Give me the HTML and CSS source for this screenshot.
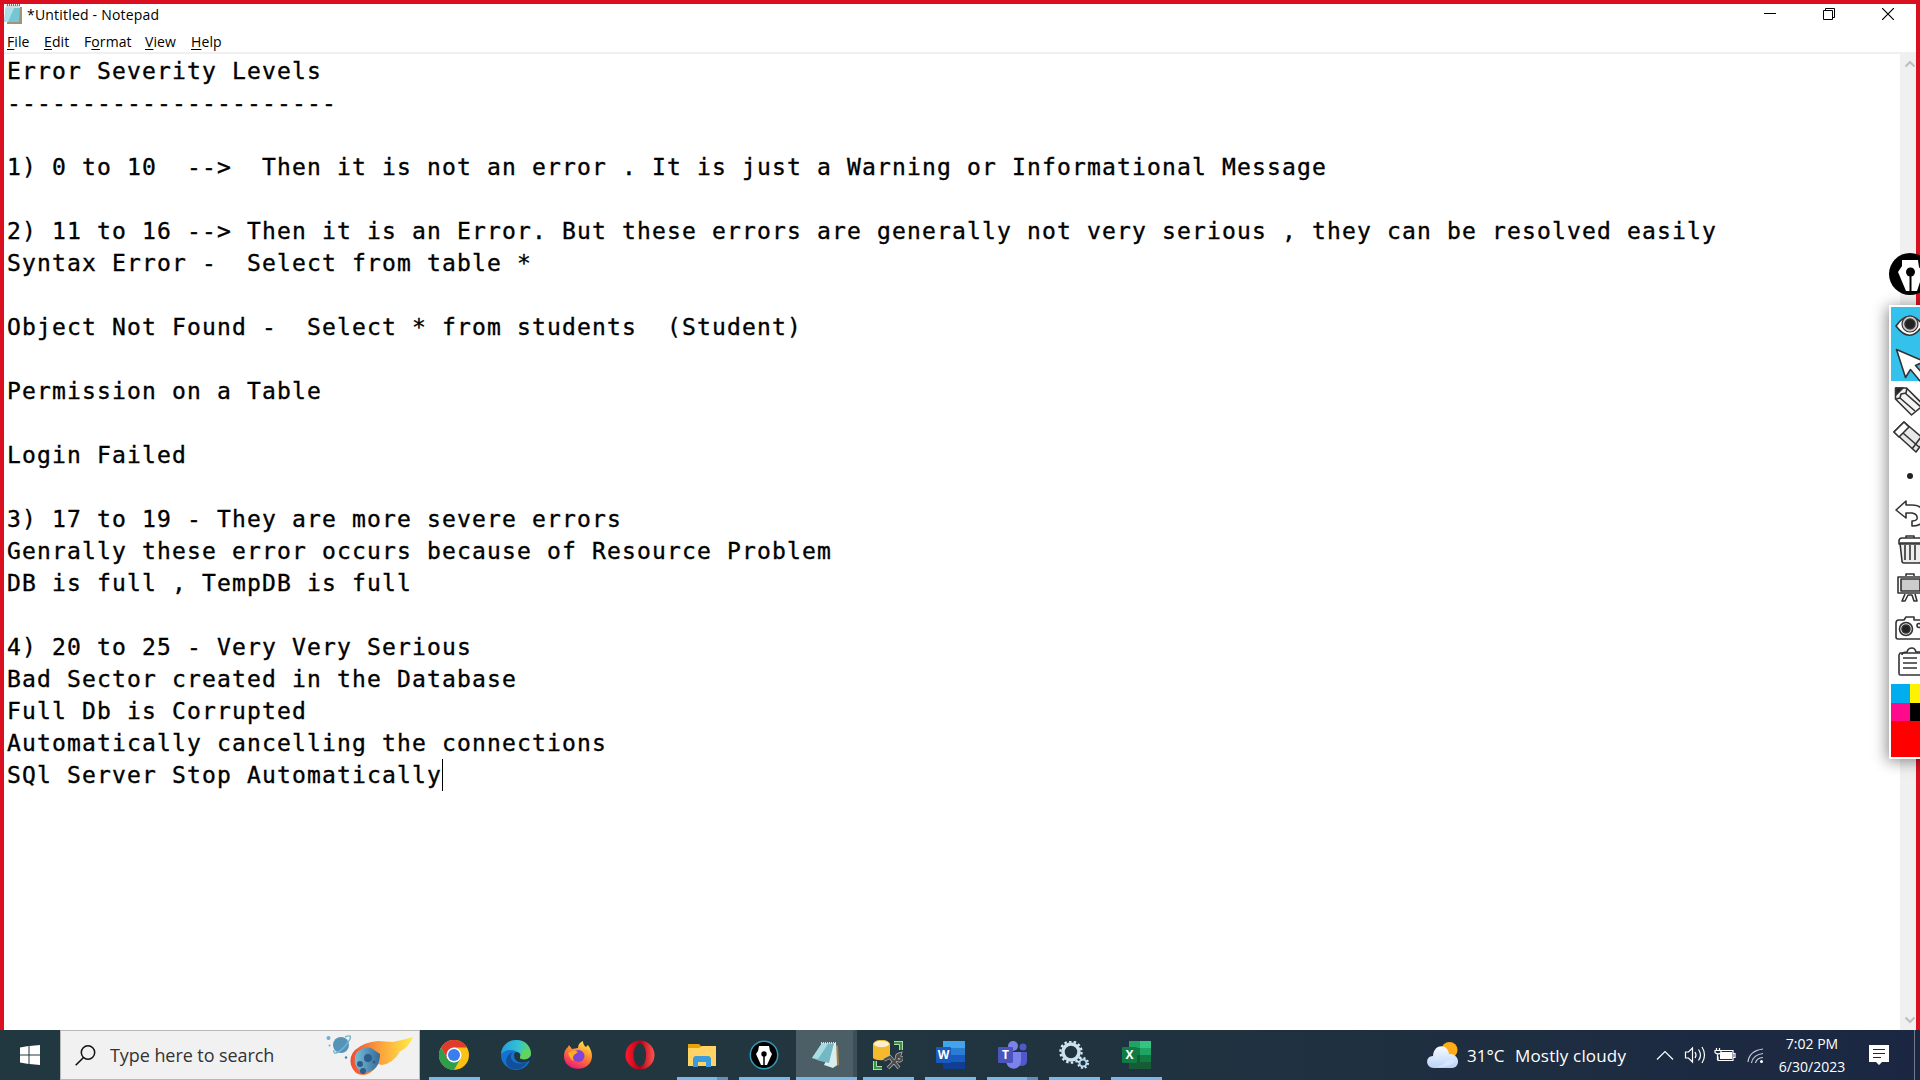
FILE: index.html
```html
<!DOCTYPE html>
<html lang="en">
<head>
<meta charset="utf-8">
<title>*Untitled - Notepad</title>
<link rel="stylesheet" href="styles.css">
</head>
<body>
<main class="window">
  <header class="titlebar">
    <svg class="app-icon" width="18" height="20" viewBox="0 0 18 20"><path d="M4 3h14v17H3z" fill="#a49476"/><path d="M2 2h14l-1 16H0z" fill="#75c6d4"/><path d="M2 2h9L4 18H0z" fill="#aae1e8"/><path d="M2 1h14v3H2z" fill="#d5dadd"/><path d="M3 1h13" stroke="#777" stroke-width="2" stroke-dasharray="1 1"/></svg>
    <span class="title">*Untitled - Notepad</span>
    <div class="controls">
      <svg width="12" height="12"><path d="M0 9.500h12" stroke="#000"/></svg>
      <svg width="12" height="12"><path d="M.5 2.500h9v9h-9zM2.500 2.500v-2h9v9h-2" fill="none" stroke="#000"/></svg>
      <svg width="12" height="12"><path d="M0 0l12 12M12 0L0 12" stroke="#000" stroke-width="1.200"/></svg>
    </div>
  </header>
  <nav class="menu"><span class="m-file"><u>F</u>ile</span><span class="m-edit"><u>E</u>dit</span><span class="m-format">F<u>o</u>rmat</span><span class="m-view"><u>V</u>iew</span><span class="m-help"><u>H</u>elp</span></nav>
  <section class="editor">
<pre class="text">Error Severity Levels
----------------------

1) 0 to 10  --&gt;  Then it is not an error . It is just a Warning or Informational Message

2) 11 to 16 --&gt; Then it is an Error. But these errors are generally not very serious , they can be resolved easily
Syntax Error -  Select from table *

Object Not Found -  Select * from students  (Student)

Permission on a Table

Login Failed

3) 17 to 19 - They are more severe errors
Genrally these error occurs because of Resource Problem
DB is full , TempDB is full

4) 20 to 25 - Very Very Serious
Bad Sector created in the Database
Full Db is Corrupted
Automatically cancelling the connections
SQl Server Stop Automatically<i class="caret"></i></pre>
    <div class="scroll">
      <svg width="10" height="8"><path d="M.5 6.500L5 2l4.500 4.500" fill="none" stroke="#bfbfbf" stroke-width="2.200"/></svg>
      <svg width="10" height="8"><path d="M.5 1.500L5 6l4.500-4.500" fill="none" stroke="#bfbfbf" stroke-width="2.200"/></svg>
    </div>
  </section>
</main>

<svg class="pen" width="31" height="42" viewBox="0 0 31 42"><circle cx="21" cy="21" r="21" fill="#000"/><path d="M13 7h16l1 7 4 6-6 18H17L9 19l4-6z" fill="#fff"/><path d="M21.500 19v19" stroke="#000" stroke-width="2"/><circle cx="21.500" cy="19" r="4.500"/></svg>
<aside class="tools">
  <div class="active"></div>
  <svg class="tool-icons" width="31" height="379" viewBox="1889 305 31 379" fill="none" stroke="#333" stroke-width="1.600" stroke-linejoin="round">
    <path d="M1896 326q13-19 27-1-13 20-27 1z" fill="#fff"/><circle cx="1910" cy="324" r="8" fill="#ccc" stroke-width="1.200"/><circle cx="1910" cy="324" r="5" fill="#222"/>
    <path d="M1896.500 349.500l28 12-9 4 10 11-5 5-10-12-5 8z" fill="#fff"/>
    <path d="M1895.500 388h11l17 17-12 10-16-16z" fill="#f4f4f4"/><path d="M1896 388h7l-7 7z" fill="#222"/><path d="M1896 399l4-1 1-4 5-1 1-5M1900 398l15 13M1905 393l16 14"/>
    <path d="M1904 422l21 18-9 12-22-20z" fill="#e8e8e8"/><path d="M1904 422l5 5-10 10-5-5z" fill="#fff"/><path d="M1903 433l16 14M1912 449l9-12"/>
    <circle cx="1910" cy="476" r="3" fill="#222" stroke="none"/>
    <path d="M1906 501l-10 9 10 8v-5h6q6 1 5 6-1 2-5 2v5q12 0 12-10 0-11-12-11h-6z" fill="#fff"/>
    <path d="M1900 543h21v18q0 2-2 2h-15q-2 0-2-2z" fill="#eee"/><path d="M1899 544v-3q0-3 3-3h20v6zM1906 538v-2h8v2M1905 545v15M1910 545v15M1915 545v15"/>
    <path d="M1906 576v-2h8v2M1898 577h24v16h-24z" fill="#fff"/><path d="M1901 579h19v12h-19z" fill="#ccc"/><path d="M1905 594l-3 7h3l3-6h4l2 6h3l-2-7"/>
    <path d="M1899 620h5l2-3h8v3h8v19h-24q-2 0-2-2v-14q0-3 3-3z" fill="#fff"/><circle cx="1906" cy="629" r="6.500" fill="#eee"/><circle cx="1906" cy="629" r="4" fill="#222"/><circle cx="1919" cy="625.500" r="2"/>
    <path d="M1900 653h21v22h-21q-1 0-1-2v-18z" fill="#fff"/><path d="M1902 655q0-3 5-3 1-4 5-4 3 0 4 4h4M1903 658h14M1903 663h14M1903 668h14"/>
  </svg>
  <div class="swatches"><b class="blue"></b><b class="yellow"></b><b class="pink"></b><b class="black"></b><b class="red"></b></div>
</aside>

<footer class="taskbar">
  <div class="start"><svg width="20" height="20" viewBox="0 0 20 20" fill="#fff"><path d="M0 2.500L8.500 1v8.500H0zM9.500 1L20 0v9.500H9.500zM0 10.500h8.500V19L0 17.500zM9.500 10.500H20V20L9.500 19z"/></svg></div>
  <div class="search">
    <svg width="21" height="21"><circle cx="13" cy="7.500" r="6.700" fill="none" stroke="#111" stroke-width="1.500"/><path d="M8.500 12.500L.7 20.300" stroke="#111" stroke-width="1.600"/></svg>
    <span>Type here to search</span>
    <svg class="comet" width="88" height="42" viewBox="325 1035 88 42">
      <defs><linearGradient id="flame"><stop offset="0" stop-color="#f04b35"/><stop offset=".5" stop-color="#fca63c"/><stop offset="1" stop-color="#ffed45"/></linearGradient><linearGradient id="rock"><stop stop-color="#79bed5"/><stop offset="1" stop-color="#336a9c"/></linearGradient></defs>
      <path d="M355 1051q9-8 23-9l15 1q14-3 20-5-4 11-16 16l3-1q-8 12-18 13l-4-1q-7 11-14 11-10 0-13-10-2-9 4-15z" fill="url(#flame)"/><path d="M357 1053q7-6 14-4l9 6q0 14-11 18-8 2-13-6-3-7 1-14z" fill="url(#rock)"/><g fill="#2d5d8a"><circle cx="368" cy="1059" r="4"/><circle cx="360" cy="1065" r="3"/><circle cx="363" cy="1072" r="3"/><circle cx="374" cy="1063" r="1.500"/></g>
      <circle cx="341" cy="1046" r="8" fill="#5394b8"/><path d="M345 1038q7-3 5 2-4 8-12 13-5 3-4-2" fill="none" stroke="#79b5cf" stroke-width="1.500"/><circle cx="328.500" cy="1039" r="2" fill="#6eaed0"/><circle cx="329.500" cy="1046.500" r="1" fill="#6eaed0"/><circle cx="346" cy="1058.500" r="1.200" fill="#477ba5"/>
    </svg>
  </div>
  <div class="apps">
    <div class="app run"><svg width="30" height="30" viewBox="0 0 30 30"><circle cx="15" cy="15" r="15" fill="#fbc116"/><path d="M2 7.500A15 15 0 0 1 28 7.500H15L8.500 19z" fill="#e23b2e"/><path d="M2 7.500A15 15 0 0 0 15 30l6.500-11.500L8.500 18.700z" fill="#2f9e4c"/><circle cx="15" cy="15" r="7.500" fill="#fff"/><circle cx="15" cy="15" r="6" fill="#3b7ded"/></svg></div>
    <div class="app"><svg width="30" height="30" viewBox="0 0 30 30"><defs><linearGradient id="edge"><stop stop-color="#279be0"/><stop offset=".6" stop-color="#32c4cf"/><stop offset="1" stop-color="#68d850"/></linearGradient></defs><circle cx="15" cy="15" r="15" fill="#1473cf"/><path d="M0 14C2-5 29-4 30 13c0 6-7 7-11 4 0-7-12-10-19-3z" fill="url(#edge)"/><path d="M12 12c-6 6 1 15 15 10q-7 9-16 7c-8-3-8-13 1-17z" fill="#114f9b"/><path d="M13 15c0 8 8 9 15 6l3 1V13q-1 7-10 6c-4-1 1-4-4-7-3 0-4 1-4 3z" fill="#213641"/><path d="M30 13q-1 8-10 6-2-1 0-4l2-6z" fill="#62d35e"/></svg></div>
    <div class="app"><svg width="28" height="28" viewBox="0 0 28 28"><defs><linearGradient id="fox" x1=".8" y1="0" x2=".3" y2="1"><stop stop-color="#fff044"/><stop offset=".5" stop-color="#ff7e2c"/><stop offset="1" stop-color="#ef1778"/></linearGradient></defs><path d="M5 4l3 4 6-1q0-5 5-7 0 4 3 6l2-2q4 6 4 11c0 17-28 17-28 0q0-6 4-9z" fill="url(#fox)"/><circle cx="14.500" cy="15" r="6" fill="#8144d8"/><path d="M4 12q5-4 10-1l-4 3q-2 3 0 6-4-1-6-8z" fill="#ffac28"/></svg></div>
    <div class="app"><svg width="30" height="30" viewBox="0 0 30 30"><defs><linearGradient id="opera"><stop stop-color="#ff1b2d"/><stop offset=".5" stop-color="#b70014"/><stop offset="1" stop-color="#ff5652"/></linearGradient></defs><path fill-rule="evenodd" d="M15 .5a14.500 14.500 0 1 0 0 29 14.500 14.500 0 1 0 0-29zM15 3.500c4 0 6 6 6 11.500s-2 11.500-6 11.500S8.500 20.500 8.500 15 11 3.500 15 3.500z" fill="url(#opera)"/></svg></div>
    <div class="app run stack"><svg width="28" height="24" viewBox="0 0 28 24"><path d="M0 1h11l3 3h13v18H0z" fill="#e6a20b"/><path d="M0 5h11l3-2h14v20H0z" fill="#ffd465"/><path d="M5 24V15l2-2h14l2 2v9h-5v-5h-8v5z" fill="#3c9cdb"/></svg></div>
    <div class="app run"><svg width="30" height="30" viewBox="0 0 30 30"><circle cx="15" cy="15" r="13.700" fill="#000" stroke="#3599b8" stroke-width="1.500"/><path d="M10 6h10l1 5 2 3-5 11h-6L7 14l2-3z" fill="#fff"/><path d="M15 14v11" stroke="#000" stroke-width="1.500"/><circle cx="15" cy="14" r="2.700"/></svg></div>
    <div class="app run focus"><svg width="28" height="28" viewBox="0 0 28 28"><path d="M23 3l4 2 1 19-5 2z" fill="#a98145"/><path d="M23 2h2l1 22-4 3-9-3z" fill="#d8eeee"/><path d="M11 2h12l-5 20q-9-1-17-5z" fill="#74b7c5"/><path d="M11 2l6 1L7 18l-6-1z" fill="#a9dce1"/><path d="M10 2h15" stroke="#ddd" stroke-width="2" stroke-dasharray="1 1"/></svg></div>
    <div class="app run"><svg width="30" height="30" viewBox="0 0 30 30"><path d="M0 4v14c2 3 14 3 17 0V4z" fill="#f5b92d"/><ellipse cx="8.500" cy="4" rx="8" ry="3.700" fill="#fff1d0" stroke="#f5b92d"/><path d="M21 3h7v7M2 21v7h7" fill="none" stroke="#dbe9dc" stroke-width="4"/><path d="M21 3h7v7M2 21v7h7" fill="none" stroke="#36963b" stroke-width="2.500"/><path d="M11 20l6-3 9 11M15 28l9-9q-1-4 3-5l-1 3 3 1q-1 4-5 2" fill="none" stroke="#b4b4b4" stroke-width="3.600"/><path d="M11 20l6-3 9 11M15 28l9-9q-1-4 3-5l-1 3 3 1q-1 4-5 2" fill="none" stroke="#4b4b4b" stroke-width="2.200"/></svg></div>
    <div class="app run"><svg width="30" height="28" viewBox="0 0 30 28"><path d="M8 0h22v28H8z" fill="#41a5ee"/><path d="M8 7h22v21H8z" fill="#2b7cd3"/><path d="M8 14h22v14H8z" fill="#185abd"/><path d="M8 21h22v7H8z" fill="#103f91"/><rect x="1" y="6" width="15" height="16" rx="1" fill="#185abd"/><text x="8.500" y="18" class="glyph">W</text></svg></div>
    <div class="app run stack"><svg width="30" height="28" viewBox="0 0 30 28"><circle cx="16" cy="5" r="5" fill="#7b83eb"/><circle cx="26" cy="6" r="3.500" fill="#5059c9"/><path d="M21 11h9v9q0 5-6 5h-3z" fill="#5059c9"/><path d="M9 11h15v8c0 12-15 11-15 0z" fill="#7b83eb"/><rect x="1" y="6" width="15" height="16" rx="1" fill="#4b53bc"/><text x="8.500" y="18" class="glyph">T</text></svg></div>
    <div class="app run"><svg width="30" height="28" viewBox="0 0 30 28"><g fill="none"><circle cx="12" cy="11" r="8" stroke="#c9e2ec" stroke-width="3.500"/><circle cx="12" cy="11" r="10.600" stroke="#dbeaf0" stroke-width="2.200" stroke-dasharray="2.500 2.260"/><circle cx="24" cy="22" r="3.500" stroke="#b4d6ed" stroke-width="2"/><circle cx="24" cy="22" r="5" stroke="#d5eaf7" stroke-width="2" stroke-dasharray="1.900 2.030"/></g></svg></div>
    <div class="app run"><svg width="30" height="28" viewBox="0 0 30 28"><path d="M8 0h22v28H8z" fill="#21a366"/><path d="M19 0h11v7H19z" fill="#33c481"/><path d="M8 7h11v7H8z" fill="#107c41"/><path d="M8 14h22v14H8z" fill="#185c37"/><path d="M19 14h11v7H19z" fill="#107c41"/><rect x="1" y="6" width="15" height="16" rx="1" fill="#107c41"/><text x="8.500" y="18" class="glyph">X</text></svg></div>
  </div>
  <div class="tray">
    <svg class="weather" width="31" height="27" viewBox="0 0 31 27"><defs><linearGradient id="cloud" x1="0" y1="0" x2="0" y2="1"><stop stop-color="#f7faff"/><stop offset="1" stop-color="#b9d3f8"/></linearGradient></defs><circle cx="22.500" cy="8" r="8" fill="#ffad16"/><path d="M7 26C-2 26-2 14 6 14 7 1 21 2 22 12c12 0 11 14 3 14z" fill="url(#cloud)"/><path d="M4 25q10 1 15-5 4-4 9-1-5 7-24 6z" fill="#d8e7ff"/></svg>
    <span class="temp">31°C</span><span class="sky">Mostly cloudy</span>
    <svg class="tray-icons" width="108" height="20" viewBox="1656 1045 108 20" fill="none" stroke="#fff" stroke-width="1.200"><path d="M1657 1059.500l8-8 8 8M1685.500 1052h3l4-4v14l-4-4h-3zM1695 1052q2 3 0 6M1698.500 1049.500q4 5.500 0 11M1702 1047q5 8 0 16"/><path d="M1720 1050.500h13v10h-15v-4M1733.500 1053.500h1.500v4h-1.500"/><path d="M1721 1052h11v7h-12v-5z" fill="#fff" stroke="none"/><path d="M1716.500 1048v2M1719.500 1048v2M1715 1050.500h6v2q-3 3-6 0zM1717.500 1054v6"/><path d="M1748 1062q1-11 15-13M1751.500 1063q1-8 11.500-9.500M1755.500 1063q1-5 7.500-5.500" stroke="#c8d0de"/><circle cx="1761.500" cy="1061.500" r="1.500" fill="#fff" stroke="none"/></svg>
    <div class="clock"><span>7:02 PM</span><span>6/30/2023</span></div>
    <svg class="notice" width="20" height="20"><path d="M0 0h20v17h-7l-3 3-3-3H0z" fill="#fff"/><path d="M4 4.500h12M4 8.500h12M4 12.500h8" stroke="#1b2941"/></svg>
    <div class="desktop"></div>
  </div>
</footer>
</body>
</html>
```
FILE: styles.css
```css
* { box-sizing: border-box; }
body { margin: 0; width: 1920px; height: 1080px; overflow: hidden; position: relative; display: flex; flex-direction: column; font-family: "Open Sans", sans-serif; background: #fff; }
svg { display: block; flex: none; }
.window { height: 1030px; border: 4px solid #da1020; border-bottom: 0; display: flex; flex-direction: column; }
.titlebar { height: 24px; display: flex; align-items: flex-start; }
.title { margin-left: 5px; font: 14px/22px "Open Sans", sans-serif; letter-spacing: .2px; white-space: nowrap; }
.controls { display: flex; gap: 47px; margin: 4px 22px 0 auto; }
.controls svg:first-child { margin-top: -4px; }
.menu { height: 24px; display: flex; font-size: 14px; line-height: 28px; letter-spacing: .1px; padding-left: 3px; white-space: nowrap; }
.menu span { flex: none; }
.menu u { text-underline-offset: 2px; text-decoration-thickness: 1px; text-decoration-skip-ink: none; }
.m-file { width: 37px; }
.m-edit { width: 40px; }
.m-format { width: 61px; }
.m-view { width: 46px; }
.editor { flex: 1; min-height: 0; border-top: 2px solid #f0f0f0; display: flex; }
.text { flex: 1; margin: 0; padding: 1px 0 0 3px; color: #000; font: 23px/32px "DejaVu Sans Mono", monospace; letter-spacing: 1.153px; -webkit-text-stroke: .35px #000; }
.caret { display: inline-block; width: 1px; height: 32px; background: #000; vertical-align: top; }
.scroll { width: 16px; background: #f0f0f0; display: flex; flex-direction: column; justify-content: space-between; align-items: center; padding: 6px 0 6px 3px; }
.pen { position: absolute; left: 1889px; top: 253px; }
.tools { position: absolute; left: 1889px; top: 305px; width: 50px; height: 454px; background: #fff; box-shadow: -2px 2px 14px rgba(0,0,0,.45); }
.active { height: 74px; margin: 2px 0 0 2px; background: #34c2ec; }
.tool-icons { margin-top: -76px; position: relative; }
.swatches { display: grid; grid-template: 19px 18px 36px / 19px 1fr; padding-left: 2px; }
.blue { background: #00aeef; }
.yellow { background: #fff200; }
.pink { background: #ff0a8c; }
.black { background: #000; }
.red { background: #f00; grid-column: span 2; }
.taskbar { height: 50px; display: flex; background: linear-gradient(90deg, #213840, #21363f 45%, #1f3040 70%, #1b2742); color: #fff; }
.start { width: 60px; padding: 15px 20px; }
.search { width: 360px; background: #f1f1f1; border: 1px solid #b8b8b8; color: #333; display: flex; align-items: center; padding-left: 14px; font-size: 18px; letter-spacing: -.07px; }
.search span { margin-left: 14px; flex: 1; white-space: nowrap; }
.comet { margin-right: 6px; }
.apps { display: flex; margin-left: 3px; }
.app { width: 62px; height: 50px; display: flex; justify-content: center; align-items: center; border: solid transparent; border-width: 0 5px 0 6px; padding-right: 2px; position: relative; }
.run::after { content: ""; position: absolute; bottom: 0; left: 0; width: 51px; height: 3px; background: #76b9ed; }
.stack::after { background: linear-gradient(90deg, #76b9ed 40px, #5f91ba 40px); }
.focus { background: #4c5f66; border: 0; border-right: 4px solid #3d4f57; width: 61px; margin-left: 1px; padding-right: 0; }
.focus::after { width: 61px; }
.glyph { font: bold 12px "Open Sans", sans-serif; fill: #fff; text-anchor: middle; }
.tray { margin-left: auto; display: flex; align-items: center; flex: none; white-space: nowrap; }
.temp { width: 48px; font-size: 17px; margin-left: 9px; }
.sky { width: 112px; font-size: 17px; letter-spacing: .17px; }
.tray-icons { margin-left: 29px; }
.clock { width: 80px; margin-left: 8px; display: flex; flex-direction: column; align-items: center; font-size: 14px; line-height: 23px; }
.notice { margin-left: 17px; }
.desktop { width: 6px; height: 50px; border-left: 1px solid #727b8b; margin-left: 25px; }
```
